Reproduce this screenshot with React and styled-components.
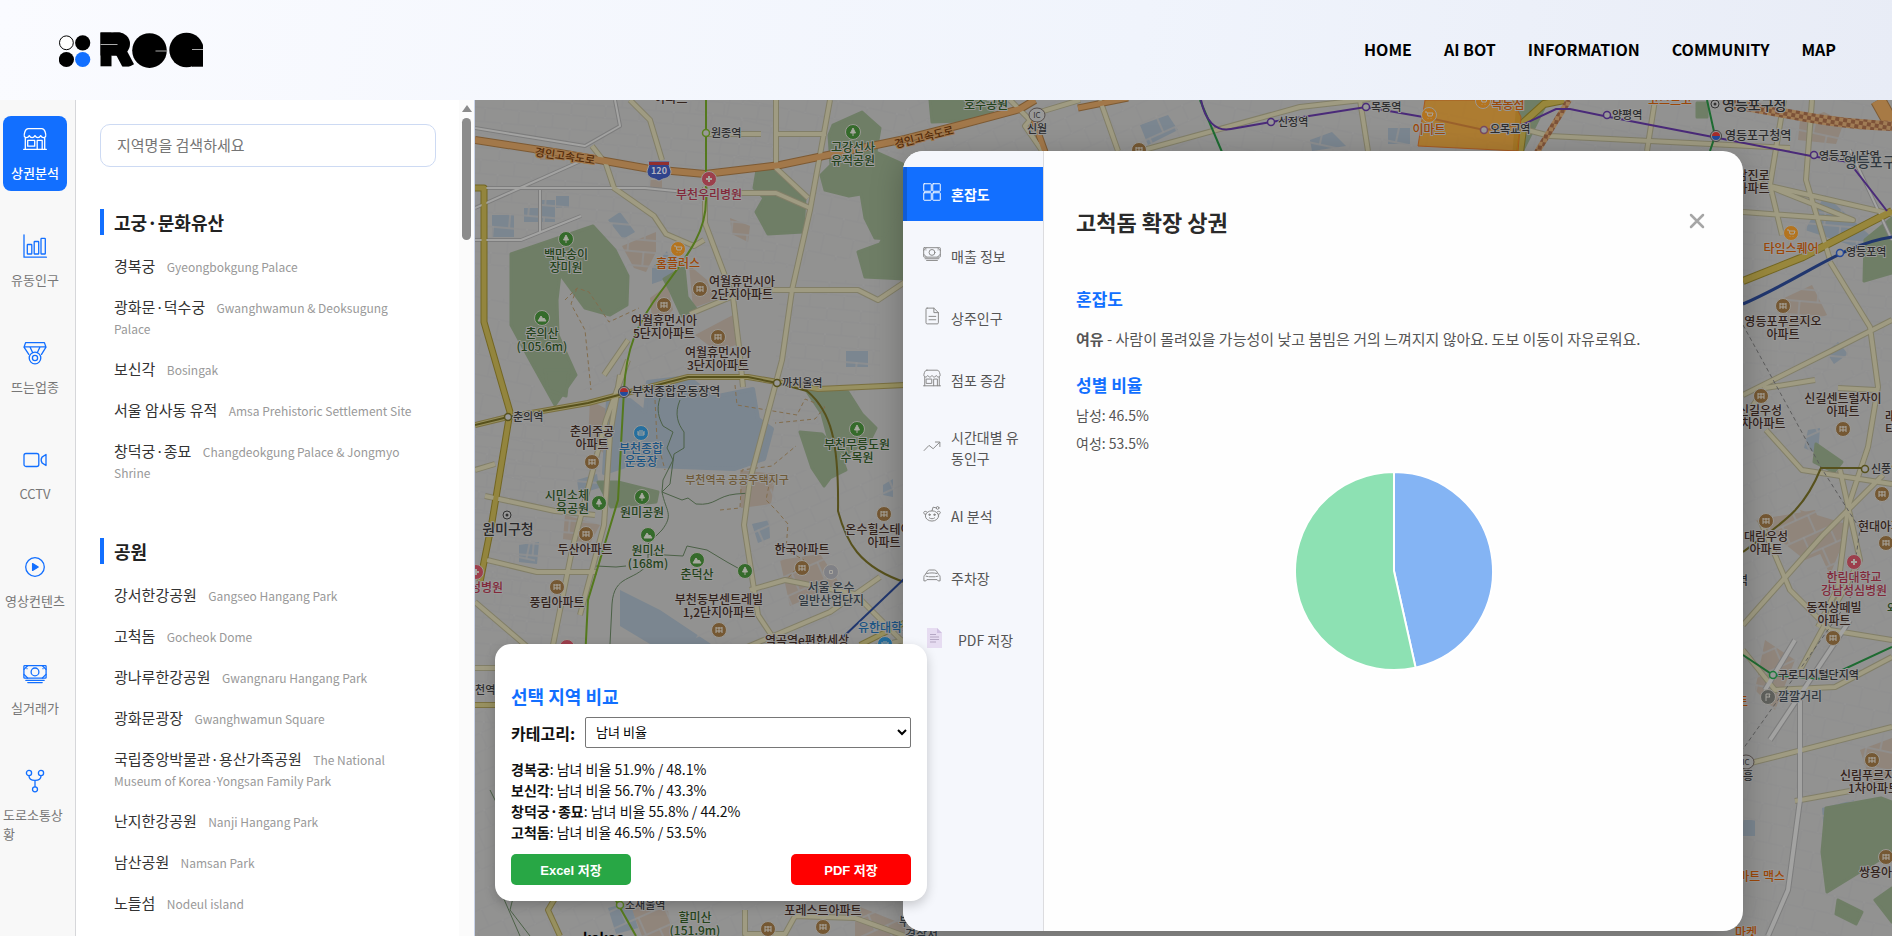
import React, { useState } from "react";
import styled, { createGlobalStyle } from "styled-components";

const GlobalStyle = createGlobalStyle`
  *, *::before, *::after { box-sizing: border-box; }
  html, body, #root { height: 100%; }
  body {
    margin: 0;
    overflow: hidden;
    font-family: "Noto Sans CJK KR", sans-serif;
    color: #222;
    background: #fff;
  }
  h1, h2, h3, p, ul { margin: 0; padding: 0; }
  ul { list-style: none; }
  button { font: inherit; color: inherit; border: 0; background: none; padding: 0; cursor: pointer; }
`;

const BLUE = "#126fff";

/* ---------- page frame ---------- */
const Page = styled.div`
  display: flex;
  flex-direction: column;
  height: 100vh;
`;
const Header = styled.header`
  display: flex;
  align-items: center;
  justify-content: space-between;
  flex: none;
  height: 100px;
  padding: 0 56px 0 59px;
  background: linear-gradient(100deg, #fafbff, #f0f4fc 60%, #e8ecf6);
`;
const HomeLink = styled.a`
  display: flex;
`;
const Nav = styled.nav`
  display: flex;
  gap: 32px;
  padding-bottom: 2px;
`;
const NavLink = styled.a`
  font-size: 16px;
  font-weight: 600;
  line-height: 24px;
  color: #000;
  text-decoration: none;
`;
const Main = styled.main`
  display: flex;
  flex: 1;
  min-height: 0;
`;

/* ---------- icon rail ---------- */
const Rail = styled.nav`
  display: flex;
  flex-direction: column;
  gap: 32px;
  flex: none;
  width: 76px;
  padding: 16px 8px 16px 3px;
  overflow: hidden;
  background: #f8f8f8;
  border-right: 1px solid #d6d7da;
`;
const RailItem = styled.button`
  display: flex;
  flex-direction: column;
  align-items: center;
  gap: 8px;
  flex: none;
  padding: 7px 0 9px;
  border-radius: 8px;
  font-size: 13px;
  line-height: 19px;
  text-align: left;
  font-weight: ${(p) => (p.$active ? 500 : 400)};
  color: ${(p) => (p.$active ? "#fff" : "#777")};
  background: ${(p) => (p.$active ? BLUE : "transparent")};
  svg { margin: 4px 0; color: ${(p) => (p.$active ? "#fff" : BLUE)}; }
`;

/* ---------- place list ---------- */
const ListPanel = styled.aside`
  display: flex;
  flex: none;
  width: 399px;
  border-right: 1px solid #c9d3e8;
  background: #fff;
`;
const ListBody = styled.div`
  flex: 1;
  min-width: 0;
  padding: 24px 23px 24px 24px;
  overflow: hidden;
`;
const ScrollTrack = styled.div`
  display: flex;
  flex-direction: column;
  align-items: center;
  gap: 6px;
  width: 15px;
  padding-top: 5px;
  background: #fbfbfb;
`;
const ScrollArrow = styled.div`
  border: 5px solid transparent;
  border-top-width: 0;
  border-bottom: 7px solid #8b8b8b;
`;
const ScrollThumb = styled.div`
  width: 9px;
  height: 122px;
  border-radius: 5px;
  background: #8b8b8b;
`;
const SearchInput = styled.input`
  display: block;
  width: 100%;
  height: 43px;
  padding: 0 16px 2px;
  border: 1px solid #cddaf3;
  border-radius: 10px;
  font: inherit;
  font-size: 15px;
  background: #fff;
  &::placeholder { color: #757575; }
`;
const Group = styled.section`
  margin-top: 42px;
  & + & { margin-top: 56px; }
`;
const GroupTitle = styled.h2`
  padding-left: 10px;
  border-left: 4px solid ${BLUE};
  font-size: 18px;
  line-height: 26px;
  font-weight: 700;
`;
const PlaceList = styled.ul`
  display: flex;
  flex-direction: column;
  gap: 20px;
  padding: 20px 14px 0;
`;
const Place = styled.li`
  font-size: 15px;
  line-height: 21px;
  color: #333;
`;
const PlaceEn = styled.span`
  margin-left: 8px;
  font-size: 12px;
  line-height: 15px;
  color: #999;
`;

/* ---------- map area ---------- */
const MapArea = styled.section`
  position: relative;
  flex: 1;
  min-width: 0;
  overflow: hidden;
  background: #929291;
`;
const MapSvg = styled.svg`
  display: block;
  width: 100%;
  height: 100%;
`;

/* ---------- district dialog ---------- */
const Dialog = styled.section`
  position: absolute;
  top: 51px;
  bottom: 5px;
  right: 149px;
  width: 840px;
  display: flex;
  overflow: hidden;
  border-radius: 20px;
  background: #fefefe;
  box-shadow: 0 8px 32px rgba(0, 0, 0, 0.25);
`;
const Tabs = styled.div`
  display: flex;
  flex-direction: column;
  gap: 8px;
  flex: none;
  width: 141px;
  padding-top: 16px;
  background: #f5f7fc;
  border-right: 1px solid #dcdcdf;
`;
const Tab = styled.button`
  display: flex;
  align-items: center;
  gap: ${(p) => (p.$wide ? 16 : 10)}px;
  min-height: 54px;
  padding: 12px 16px;
  padding-left: ${(p) => (p.$wide ? 20 : 16)}px;
  border-left: 4px solid ${(p) => (p.$active ? "#105cd6" : "transparent")};
  font-size: 14px;
  line-height: 21px;
  font-weight: ${(p) => (p.$active ? 600 : 400)};
  text-align: left;
  color: ${(p) => (p.$active ? "#fff" : "#555")};
  background: ${(p) => (p.$active ? BLUE : "transparent")};
  svg { flex: none; margin-bottom: 4px; color: ${(p) => (p.$active ? "#fff" : "#888")}; }
`;
const Detail = styled.div`
  flex: 1;
  min-width: 0;
  padding: 52px 31px 52px 32px;
  color: #555;
`;
const DetailHead = styled.div`
  display: flex;
  align-items: center;
  justify-content: space-between;
  margin-bottom: 44px;
`;
const Title = styled.h1`
  font-size: 22px;
  line-height: 36px;
  font-weight: 700;
  color: #2a2a2a;
`;
const CloseButton = styled.button`
  display: flex;
  padding: 7px;
`;
const SubTitle = styled.h2`
  font-size: 17px;
  line-height: 32px;
  font-weight: 700;
  color: ${BLUE};
`;
const Summary = styled.p`
  margin-bottom: 16px;
  padding-top: 10px;
  font-size: 15px;
  line-height: 28px;
`;
const Ratio = styled.p`
  font-size: 14px;
  line-height: 28px;
`;
const PieBox = styled.div`
  display: flex;
  justify-content: center;
  margin-top: 14px;
`;

/* ---------- comparison card ---------- */
const Compare = styled.section`
  position: absolute;
  left: 20px;
  bottom: 35px;
  width: 432px;
  padding: 40px 16px 16px;
  border-radius: 16px;
  background: #fff;
  color: #111;
  box-shadow: 0 4px 12px rgba(0, 0, 0, 0.2);
`;
const CompareTitle = styled.h2`
  font-size: 18px;
  line-height: 25px;
  font-weight: 700;
  color: ${BLUE};
`;
const Field = styled.div`
  display: flex;
  align-items: center;
  gap: 10px;
  margin: 8px 0 11px;
`;
const FieldLabel = styled.label`
  font-size: 16px;
  line-height: 24px;
  font-weight: 700;
`;
const Select = styled.select`
  flex: 1;
  height: 31px;
  padding: 0 6px 2px;
  border: 1px solid #767676;
  border-radius: 2px;
  font: inherit;
  font-size: 13px;
  color: #000;
  background: #fff;
`;
const Result = styled.li`
  font-size: 14px;
  line-height: 21px;
  b { font-weight: 700; }
`;
const Actions = styled.div`
  display: flex;
  justify-content: space-between;
  margin-top: 11px;
`;
const SaveButton = styled.button`
  width: 120px;
  height: 31px;
  border-radius: 5px;
  font-family: "Liberation Sans", "Noto Sans CJK KR", sans-serif;
  font-size: 13px;
  font-weight: 700;
  color: #fff;
  background: ${(p) => p.$color};
`;

/* ---------- icons ---------- */
const Icon = ({ size = 24, w = 1.3, children }) => (
  <svg width={size} height={size} viewBox="0 0 24 24" fill="none" stroke="currentColor"
    strokeWidth={w} strokeLinecap="round" strokeLinejoin="round" aria-hidden="true">
    {children}
  </svg>
);
const StoreIcon = (p) => (
  <Icon {...p}>
    <path d="M5.2 1.6h13.6c1.8 0 2.8 1.6 3.3 3.2.6 1.9 1 3.4.6 4.4-.4 1-1.2 1.5-2.2 1.5-1.300 0-2.200-.9-2.800-2.100-.6 1.200-1.500 2.100-2.800 2.100s-2.300-.9-2.900-2.100c-.6 1.200-1.600 2.100-2.900 2.100s-2.200-.9-2.800-2.100c-.6 1.200-1.500 2.100-2.800 2.100-1 0-1.800-.5-2.200-1.500-.4-1 0-2.500.6-4.400.5-1.600 1.500-3.200 3.300-3.200zM2.300 10.800v11.500M21.700 10.800v11.500M.7 22.400h22.600" />
    <rect x="4.700" y="13.400" width="7" height="5.800" />
    <path d="M14.200 22.300v-8.900h5v8.900" />
  </Icon>
);
const ChartIcon = (p) => (
  <Icon {...p}>
    <path d="M1 .8v22.400h22.400" />
    <rect x="4.300" y="10.500" width="4.500" height="9.500" rx=".6" />
    <rect x="11.200" y="7.500" width="4.500" height="12.500" rx=".6" />
    <rect x="18" y="4.300" width="4.300" height="15.700" rx=".6" />
  </Icon>
);
const MedalIcon = (p) => (
  <Icon {...p}>
    <path d="M2.600 1.600h18.800l1.600 4.600-4.500 7.200M2.600 1.600 1 6.200l4.800 7.200M2 5.800h20M7 5.900l2.600 5.600M17 5.900l-2.600 5.600" />
    <circle cx="12" cy="17" r="5.800" />
    <circle cx="12" cy="17" r="2.600" />
  </Icon>
);
const CameraIcon = (p) => (
  <Icon {...p}>
    <rect x="1" y="5.500" width="14.800" height="13" rx="2" />
    <path d="m23 6.500-4 2.600c-1 1.700-1 4.100 0 5.800l4 2.600z" />
  </Icon>
);
const PlayIcon = (p) => (
  <Icon {...p}>
    <circle cx="12" cy="12" r="9.300" />
    <path d="M9.600 8.600v6.800l5.600-3.400z" fill="currentColor" />
  </Icon>
);
const MoneyIcon = (p) => (
  <Icon {...p}>
    <rect x=".9" y="3.600" width="22.200" height="12.600" rx=".8" />
    <circle cx="12" cy="9.900" r="3.900" />
    <path d="M1 7.400 4.600 3.800M23 7.400l-3.600-3.600M1 12.400 4.600 16M23 12.400 19.400 16M4 6.600v.1M20 6.600v.1M2.800 18.300h18.400M4.800 20.600h14.400" />
  </Icon>
);
const ForkIcon = (p) => (
  <Icon {...p}>
    <circle cx="6" cy="4" r="2.600" />
    <circle cx="18" cy="4" r="2.600" />
    <circle cx="12" cy="20.300" r="2.500" />
    <path d="M6 6.700c0 3 2.500 4.700 6 4.700s6-1.700 6-4.700M12 11.500v6.200" />
  </Icon>
);
const GridIcon = (p) => (
  <Icon {...p}>
    {[[1, 1], [13, 1], [1, 13], [13, 13]].map(([x, y]) => (
      <rect key={`${x}-${y}`} x={x} y={y} width="10" height="10" rx=".6" />
    ))}
  </Icon>
);
const FileIcon = (p) => (
  <Icon {...p}>
    <path d="M5.500 1.500h9l6 6V21c0 1-.6 1.500-1.500 1.500H5.500C4.600 22.500 4 22 4 21V3c0-1 .6-1.500 1.500-1.500zM14.500 1.500v6h6M8 12.500h9M8 17h9" />
  </Icon>
);
const TrendIcon = (p) => (
  <Icon {...p}>
    <path d="m1.500 18 6.500-6.800 5.500 4.400L22.300 7M16.500 6.700h6v6" />
  </Icon>
);
const RedditIcon = (p) => (
  <Icon {...p}>
    <ellipse cx="12" cy="14.600" rx="8.800" ry="6.800" />
    <path d="M3.600 12.500C1.500 12.600.6 11 1 9.700c.6-1.600 3-1.800 4.400-.2M20.400 12.500c2.100-.1 3-1.700 2.600-3-.6-1.600-3-1.600-4.400 0M12 7.800l1.400-4.900 4.300 1M8.500 17.200c2 1.600 5 1.600 7 0" />
    <circle cx="19.500" cy="3.900" r="1.800" />
    <circle cx="8.700" cy="13" r="1" fill="currentColor" />
    <circle cx="15.300" cy="13" r="1" fill="currentColor" />
  </Icon>
);
const CarIcon = (p) => (
  <Icon {...p}>
    <path d="M3.800 9.200 6 5.500C6.600 4.500 7.500 4 8.600 4h6.800c1.100 0 2 .5 2.600 1.500l2.200 3.700c1.700 1 2.600 2.600 2.600 4.600v4.700h-2.600l-1.400-1.700H5.200l-1.400 1.700H1.200v-4.700c0-2 .9-3.600 2.600-4.600zM5.600 8.600c4-1 8.800-1 12.800 0M4 12.200l3 .6M20 12.200l-3 .6M8.500 13h7" />
  </Icon>
);
const PageIcon = () => (
  <svg width="15" height="20" viewBox="0 0 15 20" aria-hidden="true">
    <path d="M0 0h10l5 5v15H0z" fill="#e6dcf1" />
    <path d="M10 0v5h5z" fill="#cfc0e0" />
    <path d="M3 6.500h6M3 9h9M3 11.500h9M3 14h6" stroke="#b5a8c4" strokeWidth="1.200" />
  </svg>
);

const Logo = () => (
  <svg width="144" height="36" viewBox="59 32 144 36" role="img" aria-label="ROG">
    <circle cx="66.400" cy="42.800" r="6.900" fill="#fff" stroke="#000" />
    <circle cx="82.700" cy="42.800" r="7.600" />
    <circle cx="66.400" cy="59.500" r="7.600" />
    <circle cx="82.700" cy="59.500" r="7.600" fill={BLUE} />
    <rect x="100.500" y="32.500" width="11" height="34" />
    <rect x="100.500" y="32.500" width="20" height="23" />
    <rect x="103" y="32.500" width="27" height="23" rx="11.500" />
    <rect x="114" y="48" width="11.500" height="22" transform="rotate(-28 118 50)" />
    <rect x="99" y="66.600" width="32" height="5" fill="#f9faff" />
    <rect x="100.500" y="44" width="17" height="1" fill="#aaa" />
    <circle cx="149.500" cy="50.600" r="17.300" />
    <rect x="155.500" y="50.500" width="12" height="1" fill="#aaa" />
    <circle cx="186.500" cy="50" r="17.200" />
    <rect x="192" y="48" width="11" height="18.700" />
    <rect x="192" y="49" width="11" height="1" fill="#aaa" />
  </svg>
);

/* ---------- map drawing ---------- */
const INK = { apt: "#33231c", park: "#24431b", med: "#82283a", shop: "#9c4708", blue: "#1b5484", stn: "#2d2d2f", gov: "#28282a", ind: "#303840", area: "#6f5a38" };

const minor = [
  ["M475 100h300v170H475z", "gA"], ["M690 100h215v150l-130 20z", "gB"], ["M475 270l60 60v300H475z", "gB"],
  ["M475 420h130l-20 220-40 90h-70z", "gA"], ["M780 470h125v180H690z", "gC"], ["M905 100h300v52H905z", "gC"],
  ["M1200 100h692v55h-692z", "gB"], ["M1740 150h152v220h-152z", "gA"], ["M1740 370h152v310h-152z", "gC"],
  ["M1740 680h152v256h-152z", "gB"], ["M475 700h430v236H475z", "gC"], ["M590 320h110v70h-120z", "gC"], ["M780 280h100v90l-110 100z", "gA"],
];

const greens = [
  "M511 254 593 226 615 250 628 276 627 305 610 315 585 308 560 274 557 300 558 335 576 375 555 405 530 360 511 325z",
  "M833 125 862 112 880 128 876 152 905 165V240l-30-2-10-20-4-24-12 2-24-6-4-15 10-10-2-30z",
  "M757 170l18-2 10 12 20 18-2 34-35 2-12-22 8-14-10-10z", "M664 279l20-12 3 30 9 12-14 7-12-26z",
  "M858 252l22-8 25-45v80l-40-2z", "M806 390l42 2 14 22 14 14-6 12-24 14-16-10-8-30z", "M800 432l22 2 18 20 6 16-16 8-6 8-12-18z",
  "M598 482h20l40 10-2 10-45 5z", "M545 370l24 0-3 26-18-6z",
  "M930 100h70l-14 20-54 2z", "M1865 240l27-22v55l-28 8z", "M1816 444l26 18-8 10-20-10z", "M1826 808l55-10 11 4v50l-65 40-5-40z",
  "M1838 900l24 12-6 12-20-10z", "M1875 900l17-12v34z", "M1697 103h10v14h-10z", "M1518 100h30l-26 52h-8z",
];
const waters = [
  "M620 590l40 20 60 40-50 6-50-30z", "M652 268l15-17 8 25-23 8z",
  "M492 215h22v22h-22z", "M524 208h15v14h-15zM541 200h14v22h-14zM556 196h13v12h-13z", "M608 220l12-8 15 20-12 7z", "M846 351h22v16h-22z",
  "M1140 125l28-10 10 15-30 15z", "M1310 140l22-8 14 14-34 5z", "M1388 128h22v16h-22z", "M1530 100h18l-24 45-8 4z",
  "M1805 230l60 20 10-10-50-45z", "M1826 352l12-10 10 12-14 10z", "M1822 808l32-8-6 22-24 12z", "M1808 430l12-2-2 26-14-6z",
  "M519 545l20-3-2 22-18-2z", "M752 524l17-4 1 18-12 5z", "M883 485l10-6v18l-10-2z", "M1743 820h12v16h-12z", "M608 908l22-6 8 26-22 6z", "M577 480l20-6 2 14-20 6z",
];
const lake = "M608 400h22l15 12 3-30 40-5 25 20 40-8 5 30 14 10-8 30-30 10-80-3-20-3-30 10z";
const blocks = [
  "M622 246l34-14 0 20-10 20-12-4z", "M650 298l18-13 5 25-20 20z", "M695 335l38-20 3 30-20 6z", "M689 265l18 15 8 20-22 8z",
  "M590 400l18 10-2 45-18-14z", "M740 470l36 4-5 30-30 4z",
  "M565 515l35 10-10 18-27-4z", "M780 560l40-6 20 30-50 22z",
  "M1780 300l32-15 15 30-40 15z", "M1755 520l60-10 15 40-25 10z", "M1800 510l50 15-20 50z", "M1765 640l30 20-20 50-20-20z", "M1860 750l32-12v40l-20 8z",
  "M630 905l38 6 4 25h-30z", "M855 905l50 20v11h-50z", "M540 150h12v10h-12zM650 180h12v10h-12z", "M730 218l20 8-2 16-16-8z", "M1800 120l24-8 20 10-8 22-38-4z",
];
/* [path, casing colour, fill colour, width] */
const roads = [
  ["M475 240h46l60-24M475 208L592 156M540 190v42M475 188h170l60 6M475 128l110 18 35-20-5-26M1850 150l42 90", "#7d7d7d", "#a3a3a2", 2],
  ["M630 100l20 20 12 40M592 146l14 18 8 24 40 28 12 18 28 12 10-6M705 187v36l28 74 6 50 4 40", "#827f68", "#9f9b82", 4],
  ["M776 100v68l32 30M776 134h50M705 134h56M740 193h36l34 15", "#827f68", "#9f9b82", 4],
  ["M830 100l-20 110-18 80-10 70-32 120-6 45 14 90 40 60M690 314l48-20 30-4h90l20 10 27-18", "#827f68", "#9f9b82", 4],
  ["M628 360l-22 60-34 130-30 150M620 375l-10 60-6 90-24 90M485 496l70 15 40 4M487 560l50 12h60M750 590l35-10 70 14 50 50M740 650l90-38 50-35", "#827f68", "#9f9b82", 4],
  ["M628 340l-24 35M475 470l20-6M475 602l70 60 20 70M475 668h45", "#827f68", "#9f9b82", 4],
  ["M475 188h9v134l26 90-18 110-12 60", "#736622", "#93853e", 5],
  ["M475 425l33-8 80-14 100-26h60l70 12 87-4M860 645l60-30M475 705h22M560 890l-12 20 12 26", "#7a7040", "#979060", 4],
  ["M905 640l-60 14-80 40M745 910v24h40l10-18 60 2 50 18", "#827f68", "#9f9b82", 4],
  ["M1010 100l20 20-5 6 18 26M1040 112l40-12M1140 151l160-44 70-8M1100 100l18 51M1360 100l8 51M1520 128l30 8 240 12", "#827f68", "#9f9b82", 4],
  ["M1655 100l-8 51M1784 100l-14 85 12 50M1812 100l-6 80 24 80M1743 212l110 8-100-40M1770 186l122 28", "#827f68", "#9f9b82", 4],
  ["M1743 395l90-45 59-30M1830 262l40 65 8 60-10 60-20 60-10 80-20 40M1743 420l22-32 50-8M1766 430l36 40 90 14M1743 625l80-90 60-60", "#827f68", "#9f9b82", 4],
  ["M1760 520l30 70 40 40 62 10M1840 470l20 90-60 110M1743 765l149-38M1795 801l55-10M1743 650l32 40 60-3 57-30M1838 388l38 2", "#827f68", "#9f9b82", 4],
  ["M1800 690v110l-12 90-20 46M1850 620l-80 120M1765 690l30-50", "#7d7d7d", "#a3a3a2", 4],
  ["M1743 281l60-24 89-46", "#736622", "#98873c", 6],
  ["M1520 152l4-30 20-18 20-4", "#736622", "#98873c", 6],
  ["M1892 125l-14-25", "#7d5a33", "#a77a45", 14],
  ["M475 140l85 13 90 16 55 5 75-9 125-26 55-14 60-16 15-9", "#7d5a33", "#a2784a", 6],
  ["M1033 118l12 34M1078 108l50-10", "#7d5a33", "#a2784a", 5],
];
const rails = [
  ["M706 100v100c0 30-14 50-44 90-26 34-36 60-38 100l-6 110-30 100-3 60", "#54791d", 2],
  ["M475 425l33-8 80-14 100-26h60l29 6 30 8c24 20 32 50 31 120 8 30 20 56 69 72", "#57511c", 2],
  ["M905 578l-65 62", "#20366e", 2], ["M1200 100l22 52", "#1d6b31", 2], ["M1707 100l8 36-5 15", "#1d6b31", 2],
  ["M1201 100c4 20 14 32 30 29l40-7 95-15 63 11 55 12 40-6 32-15h14l34 7 109 21 98 19 38 6 38 49", "#4a2a79", 2],
  ["M1743 304c60-26 100-60 149-67", "#20366e", 3], ["M1743 552c40-30 60-40 78-84h44", "#57511c", 2],
  ["M1743 655l30 20 50 4 69-32", "#1d6b31", 2], ["M610 890l26 46", "#54791d", 2],
];
const trails = "M660 398c-4 12-1 20 3 28l10 6-6 16 6 12-10 20-1 12c4 20 12 22 0 38l-14 14v20c-14 18-34 10-36 40l-2 40M680 400c-6 14-2 24 4 32v16l-10 6-4 30-8 8 20 8 6-2 8 6c20 2 20-8 40-10l14-1M596 566l20 1 10-1M648 554l35 2 4-10 20 4 20 12 18 10M490 790l10 20-4 30M520 870l-10 40 20 26M500 890l20 46";

const pins = [
  ["park", 853, 132], ["med", 709, 179], ["park", 566, 239], ["hill", 542, 318], ["shop", 678, 249], ["apt", 700, 289], ["apt", 664, 305], ["apt", 718, 337],
  ["apt", 592, 462], ["blue", 641, 433], ["park", 857, 429], ["park", 599, 503], ["park", 642, 497], ["apt", 586, 534], ["hill", 648, 535], ["hill", 697, 560],
  ["park", 745, 571], ["apt", 802, 568], ["apt", 884, 514], ["ind", 831, 572], ["apt", 557, 587], ["med", 476, 572], ["apt", 719, 630], ["blue", 885, 644], ["med", 567, 647],
  ["apt", 768, 929], ["apt", 823, 927], ["shop", 1791, 233], ["apt", 1783, 306], ["apt", 1761, 396], ["apt", 1843, 429], ["apt", 1882, 494], ["apt", 1766, 521],
  ["apt", 1886, 543], ["med", 1854, 562], ["apt", 1833, 638], ["flag", 1768, 697], ["apt", 1872, 760], ["apt", 1886, 857], ["shop", 1483, 101], ["shop", 1429, 115], ["apt", 1139, 150],
];
const stations = [
  [706, 133, "#5a8220"], [777, 383, "#57511c"], [508, 417, "#57511c"], [620, 905, "#5a8220"], [1814, 155, "#4a2a79"], [1840, 253, "#24489a"],
  [1865, 469, "#57511c"], [1773, 675, "#1d7b3a"], [1271, 122, "#4a2a79"], [1366, 107, "#4a2a79"], [1484, 130, "#7a4a60"], [1607, 115, "#4a2a79"],
];
/* [lines, x, y of the first line's centre, kind, anchor, size] */
const labels = [
  ["아파트", 671, 99, "apt"], ["원종역", 711, 133, "stn", "start", 11], ["고강선사|유적공원", 853, 148, "park"], ["부천우리병원", 709, 195, "med"],
  ["백만송이|장미원", 566, 255, "park"], ["춘의산|(105.6m)", 542, 334, "park"], ["홈플러스", 678, 264, "shop"], ["여월휴먼시아|2단지아파트", 742, 282, "apt"],
  ["여월휴먼시아|5단지아파트", 664, 321, "apt"], ["여월휴먼시아|3단지아파트", 718, 353, "apt"], ["부천종합운동장역", 632, 392, "stn", "start"],
  ["까치울역", 782, 383, "stn", "start", 11], ["춘의역", 513, 417, "stn", "start", 11], ["춘의주공|아파트", 592, 432, "apt"], ["부천종합|운동장", 641, 449, "blue"],
  ["부천역곡 공공주택지구", 737, 480, "area", "middle", 11], ["부천무릉도원|수목원", 857, 445, "park"], ["시민소체|육공원", 589, 496, "park", "end"], ["원미공원", 642, 513, "park"],
  ["원미구청", 508, 530, "gov", "middle", 14], ["두산아파트", 585, 550, "apt"], ["원미산|(168m)", 648, 551, "park"], ["춘덕산", 697, 575, "park"], ["한국아파트", 802, 550, "apt"],
  ["온수힐스테이트|아파트", 884, 530, "apt"], ["서울 온수|일반산업단지", 831, 588, "ind"], ["풍림아파트", 557, 603, "apt"], ["성병원", 503, 588, "med", "end"],
  ["부천동부센트레빌|1,2단지아파트", 719, 600, "apt"], ["역곡역e편한세상", 807, 641, "apt"], ["유한대학교", 858, 628, "blue", "start"], ["부천역", 465, 690, "stn", "start", 11],
  ["소새울역", 625, 905, "stn", "start", 11], ["할미산|(151.9m)", 695, 918, "park"], ["포레스트아파트", 823, 911, "apt"], ["부천", 899, 922, "ind", "start"], ["경찰서", 905, 935, "ind", "start"],
  ["영등포구청", 1722, 106, "gov", "start", 14], ["영등포구청역", 1725, 136, "stn", "start"], ["영등포시장역", 1819, 156, "stn", "start", 11], ["영등포구", 1844, 163, "ind", "start", 14],
  ["남진로|아파트", 1753, 176, "apt"], ["타임스퀘어", 1791, 249, "shop"], ["영등포역", 1846, 252, "stn", "start", 11], ["영등포푸르지오|아파트", 1783, 322, "apt"],
  ["신길우성|2차아파트", 1760, 411, "apt"], ["신길센트럴자이|아파트", 1843, 399, "apt"], ["래미안|티", 1885, 417, "apt", "start"], ["신풍역", 1871, 469, "stn", "start", 11],
  ["대림우성|아파트", 1766, 537, "apt"], ["현대아파트", 1858, 527, "apt", "start"], ["한림대학교|강남성심병원", 1854, 578, "med"], ["동작상떼빌|아파트", 1834, 608, "apt"],
  ["역", 1748, 581, "stn", "end"], ["구로디지털단지역", 1778, 675, "stn", "start", 11], ["깔깔거리", 1778, 697, "ind", "start"], ["흥", 1748, 776, "stn", "middle", 11], ["신림푸르지오", 1840, 776, "apt", "start"],
  ["1차아파트", 1848, 789, "apt", "start"], ["쌍용아파트", 1859, 873, "apt", "start"], ["이마트 맥스", 1785, 877, "shop", "end"], ["마켓", 1735, 933, "shop", "start"], ["트", 1748, 702, "shop", "end"],
  ["와", 1887, 609, "park", "start"], ["호수공원", 986, 105, "park"], ["신월", 1037, 129, "stn", "middle", 11], ["신정역", 1278, 122, "stn", "start", 11], ["목동역", 1371, 107, "stn", "start", 11],
  ["목동점", 1508, 105, "shop"], ["이마트", 1429, 130, "shop"], ["오목교역", 1490, 129, "stn", "start", 11], ["양평역", 1612, 115, "stn", "start", 11], ["코스트코", 1670, 101, "shop"],
];
const PIN = { apt: "#755833", park: "#356b2b", hill: "#356b2b", med: "#9c3f4c", shop: "#b4741f", blue: "#256f9f", ind: "#808186", flag: "#5f605c" };
const GLYPH = {
  apt: "M-3-3v6M0-3v6M3-3v6M-3-2h6M-3 1h6", park: "M0-4l2.500 5h-5zM0 1v3", hill: "M-4 3l3-5 2 3 1-1 2 3z", med: "M-3 0h6M0-3v6",
  shop: "M-4-3h2l1 4h4l1-3h-5M-1 3v.5M2 3v.5", blue: "M-3-2v4h6v-4M-3 0h6M-1-3v2M1-3v2", ind: "M-1.500-1.500h3v3h-3z", flag: "M-2 4v-7h4l-1 2 1 1h-4",
};

const SeoulMap = () => (
  <MapSvg role="img" aria-label="지도">
    <defs>
      {[["gA", 5, 17, 13], ["gB", 12, 15, 19], ["gC", -24, 14, 18]].map(([id, deg, w, h]) => (
        <pattern key={id} id={id} width={w * 2} height={h * 2} patternUnits="userSpaceOnUse" patternTransform={`rotate(${deg})`}>
          <path d={`M0 1h${w * 2}M0 ${h}h${w * 2}M1 0v${h}M${w} ${h}v${h}`} stroke="#888889" strokeWidth="2" fill="none" />
          <path d={`M0 1h${w * 2}M0 ${h}h${w * 2}M1 0v${h}M${w} ${h}v${h}`} stroke="#989898" fill="none" />
        </pattern>
      ))}
      <pattern id="check" width="8" height="8" patternUnits="userSpaceOnUse" patternTransform="rotate(10)">
        <rect width="8" height="8" fill="#a07c55" />
        <path d="M0 0h4v4H0zM4 4h4v4H4z" fill="#7d5238" />
      </pattern>
    </defs>
    <g transform="translate(-475 -100)">
      <rect x="475" y="100" width="4000" height="2000" fill="#929291" />
      {blocks.map((d) => <path key={d} d={d} fill="#90857b" />)}
      {waters.map((d) => <path key={d} d={d} fill="#7b8690" />)}
      {minor.map(([d, id]) => <path key={d} d={d} fill={`url(#${id})`} opacity=".8" />)}
      {greens.map((d) => <path key={d} d={d} fill="#6f7e66" stroke="#6f7e66" strokeWidth="3" strokeLinejoin="round" />)}
      <path d={lake} fill="#7b8690" stroke="#7b8690" strokeWidth="4" strokeLinejoin="round" />
      <path d="M565 300l12-12 12 4 20 30 30-14M577 288l-6 16 14 26 6 60M655 400l2 40 8 30M735 385l2 20 60 10 8-16 20 8-10 12-40 4M720 510l20-2 2-38 30-4 24-20M770 480l-4 20 10 10 12 14-2 26 18 10-16 18" fill="none" stroke="#836d4d" strokeDasharray="4 3" />
      <path d={trails} fill="none" stroke="#4c6147" strokeWidth="1" strokeLinejoin="round" />
      {roads.map(([d, edge, , w]) => <path key={d} d={d} fill="none" stroke={edge} strokeWidth={w + 2} strokeLinejoin="round" />)}
      {roads.map(([d, , fill, w]) => <path key={d} d={d} fill="none" stroke={fill} strokeWidth={w} strokeLinejoin="round" />)}
      <path d="M1729 104c40 4 90 20 163 22" fill="none" stroke="url(#check)" strokeWidth="10" />
      <path d="M1569 100l-32 52" fill="none" stroke="url(#check)" strokeWidth="6" />
      <path d="M1743 325l79 144 38 60-10 70-107 150" fill="none" stroke="#5d5d5d" strokeWidth="1" strokeDasharray="4 3" />
      {rails.map(([d, c, w]) => <path key={d} d={d} fill="none" stroke={c} strokeWidth={w} />)}
      <path d="M1425 100h88l8 17-3 34-100-5z" fill="#b57412" fillOpacity=".75" stroke="#a85a20" />
      {stations.map(([x, y, c]) => <circle key={`${x}-${y}`} cx={x} cy={y} r="3.500" fill="#999" stroke={c} strokeWidth="1.500" />)}
      {[[624, 392], [1716, 136]].map(([x, y]) => (
        <g key={x}>
          <circle cx={x} cy={y} r="5.500" fill="#999" stroke="#444" />
          <path d={`M${x - 4} ${y}a4 4 0 0 1 8 0z`} fill="#a82d2d" />
          <path d={`M${x - 4} ${y}a4 4 0 0 0 8 0z`} fill="#234a9c" />
        </g>
      ))}
      {[[507, 515], [1715, 104]].map(([x, y]) => (
        <g key={x}>
          <circle cx={x} cy={y} r="4" fill="#999" stroke="#333" />
          <circle cx={x} cy={y} r="1.500" fill="#333" />
        </g>
      ))}
      {[[1037, 115], [1746, 762]].map(([x, y]) => (
        <g key={x}>
          <ellipse cx={x} cy={y} rx="8" ry="7" fill="#999" stroke="#554d4a" />
          <text x={x} y={y + 3} fontSize="8" textAnchor="middle" fill="#333">IC</text>
        </g>
      ))}
      <path d="M648 161h22l-1 4 2 6c0 5-3 7-8 8l-4 2-4-2c-5-1-8-3-8-8l2-6z" fill="#30448c" stroke="#999" />
      <path d="M649 162h20v3h-20z" fill="#922f2f" />
      <text x="659" y="174" fontSize="9" fontWeight="700" textAnchor="middle" fill="#b5b5c0">120</text>
      {[[565, 156, 8], [924, 137, -14]].map(([x, y, a]) => (
        <text key={x} x={x} y={y + 4} transform={`rotate(${a} ${x} ${y})`} textAnchor="middle" fontSize="11" fontWeight="500"
          fill="#552c0a" stroke="#a2784a" strokeWidth="2" paintOrder="stroke">경인고속도로</text>
      ))}
      {pins.map(([k, x, y]) => (
        <g key={`${x}-${y}`} transform={`translate(${x} ${y})`}>
          <circle r="7.500" fill={PIN[k]} stroke="#9b9994" strokeWidth="1" />
          <path d={GLYPH[k]} fill={k === "park" || k === "hill" ? "#a5aea0" : "none"} stroke="#a9a69f" strokeWidth={k === "med" ? 2 : 1} />
        </g>
      ))}
      {labels.map(([t, x, y, kind, anchor = "middle", size = 12]) => (
        <text key={`${t}${y}`} fontSize={size} fontWeight="500" textAnchor={anchor} fill={INK[kind]} stroke="#989897" strokeWidth="2" paintOrder="stroke" strokeLinejoin="round">
          {t.split("|").map((line, i) => <tspan key={line} x={x} y={y + 4 + i * 13}>{line}</tspan>)}
        </text>
      ))}
      <text x="583" y="943" fontSize="14" fontWeight="700" fill="#000">kakao</text>
    </g>
  </MapSvg>
);

/* ---------- data ---------- */
const NAV = ["HOME", "AI BOT", "INFORMATION", "COMMUNITY", "MAP"];
const RAIL = [
  ["상권분석", StoreIcon], ["유동인구", ChartIcon], ["뜨는업종", MedalIcon], ["CCTV", CameraIcon],
  ["영상컨텐츠", PlayIcon], ["실거래가", MoneyIcon], ["도로소통상황", ForkIcon],
];
const GROUPS = [
  ["고궁·문화유산", [
    ["경복궁", "Gyeongbokgung Palace"], ["광화문·덕수궁", "Gwanghwamun & Deoksugung Palace"], ["보신각", "Bosingak"],
    ["서울 암사동 유적", "Amsa Prehistoric Settlement Site"], ["창덕궁·종묘", "Changdeokgung Palace & Jongmyo Shrine"],
  ]],
  ["공원", [
    ["강서한강공원", "Gangseo Hangang Park"], ["고척돔", "Gocheok Dome"], ["광나루한강공원", "Gwangnaru Hangang Park"],
    ["광화문광장", "Gwanghwamun Square"], ["국립중앙박물관·용산가족공원", "The National Museum of Korea·Yongsan Family Park"],
    ["난지한강공원", "Nanji Hangang Park"], ["남산공원", "Namsan Park"], ["노들섬", "Nodeul island"],
  ]],
];
const TABS = [
  ["혼잡도", GridIcon], ["매출 정보", MoneyIcon], ["상주인구", FileIcon], ["점포 증감", StoreIcon],
  ["시간대별 유동인구", TrendIcon], ["AI 분석", RedditIcon], ["주차장", CarIcon], ["PDF 저장", PageIcon],
];
const RESULTS = [["경복궁", 51.9, 48.1], ["보신각", 56.7, 43.3], ["창덕궁·종묘", 55.8, 44.2], ["고척돔", 46.5, 53.5]];

const Pie = ({ male }) => {
  const a = (male / 100) * Math.PI * 2;
  const x = 100 + 99 * Math.sin(a);
  const y = 100 - 99 * Math.cos(a);
  return (
    <svg width="200" height="200" viewBox="0 0 200 200" role="img" aria-label="성별 비율" stroke="#fff" strokeWidth="2">
      <path d={`M100 100V1A99 99 0 0 1 ${x} ${y}z`} fill="#84b4f4" />
      <path d={`M100 100L${x} ${y}A99 99 0 1 1 100 1z`} fill="#8de1b3" />
    </svg>
  );
};

export default function App() {
  const [tab, setTab] = useState(0);
  return (
    <Page>
      <GlobalStyle />
      <Header>
        <HomeLink href="#"><Logo /></HomeLink>
        <Nav>{NAV.map((n) => <NavLink key={n} href="#">{n}</NavLink>)}</Nav>
      </Header>
      <Main>
        <Rail>
          {RAIL.map(([name, Glyph], i) => (
            <RailItem key={name} type="button" $active={i === 0}>
              <Glyph />
              <span>{name}</span>
            </RailItem>
          ))}
        </Rail>
        <ListPanel>
          <ListBody>
            <SearchInput type="text" placeholder="지역명을 검색하세요" aria-label="지역명 검색" />
            {GROUPS.map(([title, places]) => (
              <Group key={title}>
                <GroupTitle>{title}</GroupTitle>
                <PlaceList>
                  {places.map(([ko, en]) => <Place key={ko}>{ko} <PlaceEn>{en}</PlaceEn></Place>)}
                </PlaceList>
              </Group>
            ))}
          </ListBody>
          <ScrollTrack aria-hidden="true">
            <ScrollArrow />
            <ScrollThumb />
          </ScrollTrack>
        </ListPanel>
        <MapArea>
          <SeoulMap />
          <Dialog role="dialog" aria-label="고척돔 확장 상권">
            <Tabs>
              {TABS.map(([name, Glyph], i) => (
                <Tab key={name} type="button" $active={tab === i} $wide={Glyph === PageIcon} onClick={() => setTab(i)}>
                  <Glyph size={18} />
                  <span>{name}</span>
                </Tab>
              ))}
            </Tabs>
            <Detail>
              <DetailHead>
                <Title>고척돔 확장 상권</Title>
                <CloseButton type="button" aria-label="닫기">
                  <svg width="16" height="16" viewBox="0 0 16 16" stroke="#a6a6a6" strokeWidth="2.500" strokeLinecap="round">
                    <path d="M2 2l12 12M14 2L2 14" />
                  </svg>
                </CloseButton>
              </DetailHead>
              <SubTitle>혼잡도</SubTitle>
              <Summary>
                <b>여유</b> - 사람이 몰려있을 가능성이 낮고 붐빔은 거의 느껴지지 않아요. 도보 이동이 자유로워요.
              </Summary>
              <SubTitle>성별 비율</SubTitle>
              <Ratio>남성: 46.5%</Ratio>
              <Ratio>여성: 53.5%</Ratio>
              <PieBox><Pie male={46.5} /></PieBox>
            </Detail>
          </Dialog>
          <Compare>
            <CompareTitle>선택 지역 비교</CompareTitle>
            <Field>
              <FieldLabel htmlFor="category">카테고리:</FieldLabel>
              <Select id="category" defaultValue="gender">
                <option value="gender">남녀 비율</option>
              </Select>
            </Field>
            <ul>
              {RESULTS.map(([name, m, f]) => <Result key={name}><b>{name}</b>: 남녀 비율 {m}% / {f}%</Result>)}
            </ul>
            <Actions>
              <SaveButton type="button" $color="#28a745">Excel 저장</SaveButton>
              <SaveButton type="button" $color="#ff0000">PDF 저장</SaveButton>
            </Actions>
          </Compare>
        </MapArea>
      </Main>
    </Page>
  );
}
